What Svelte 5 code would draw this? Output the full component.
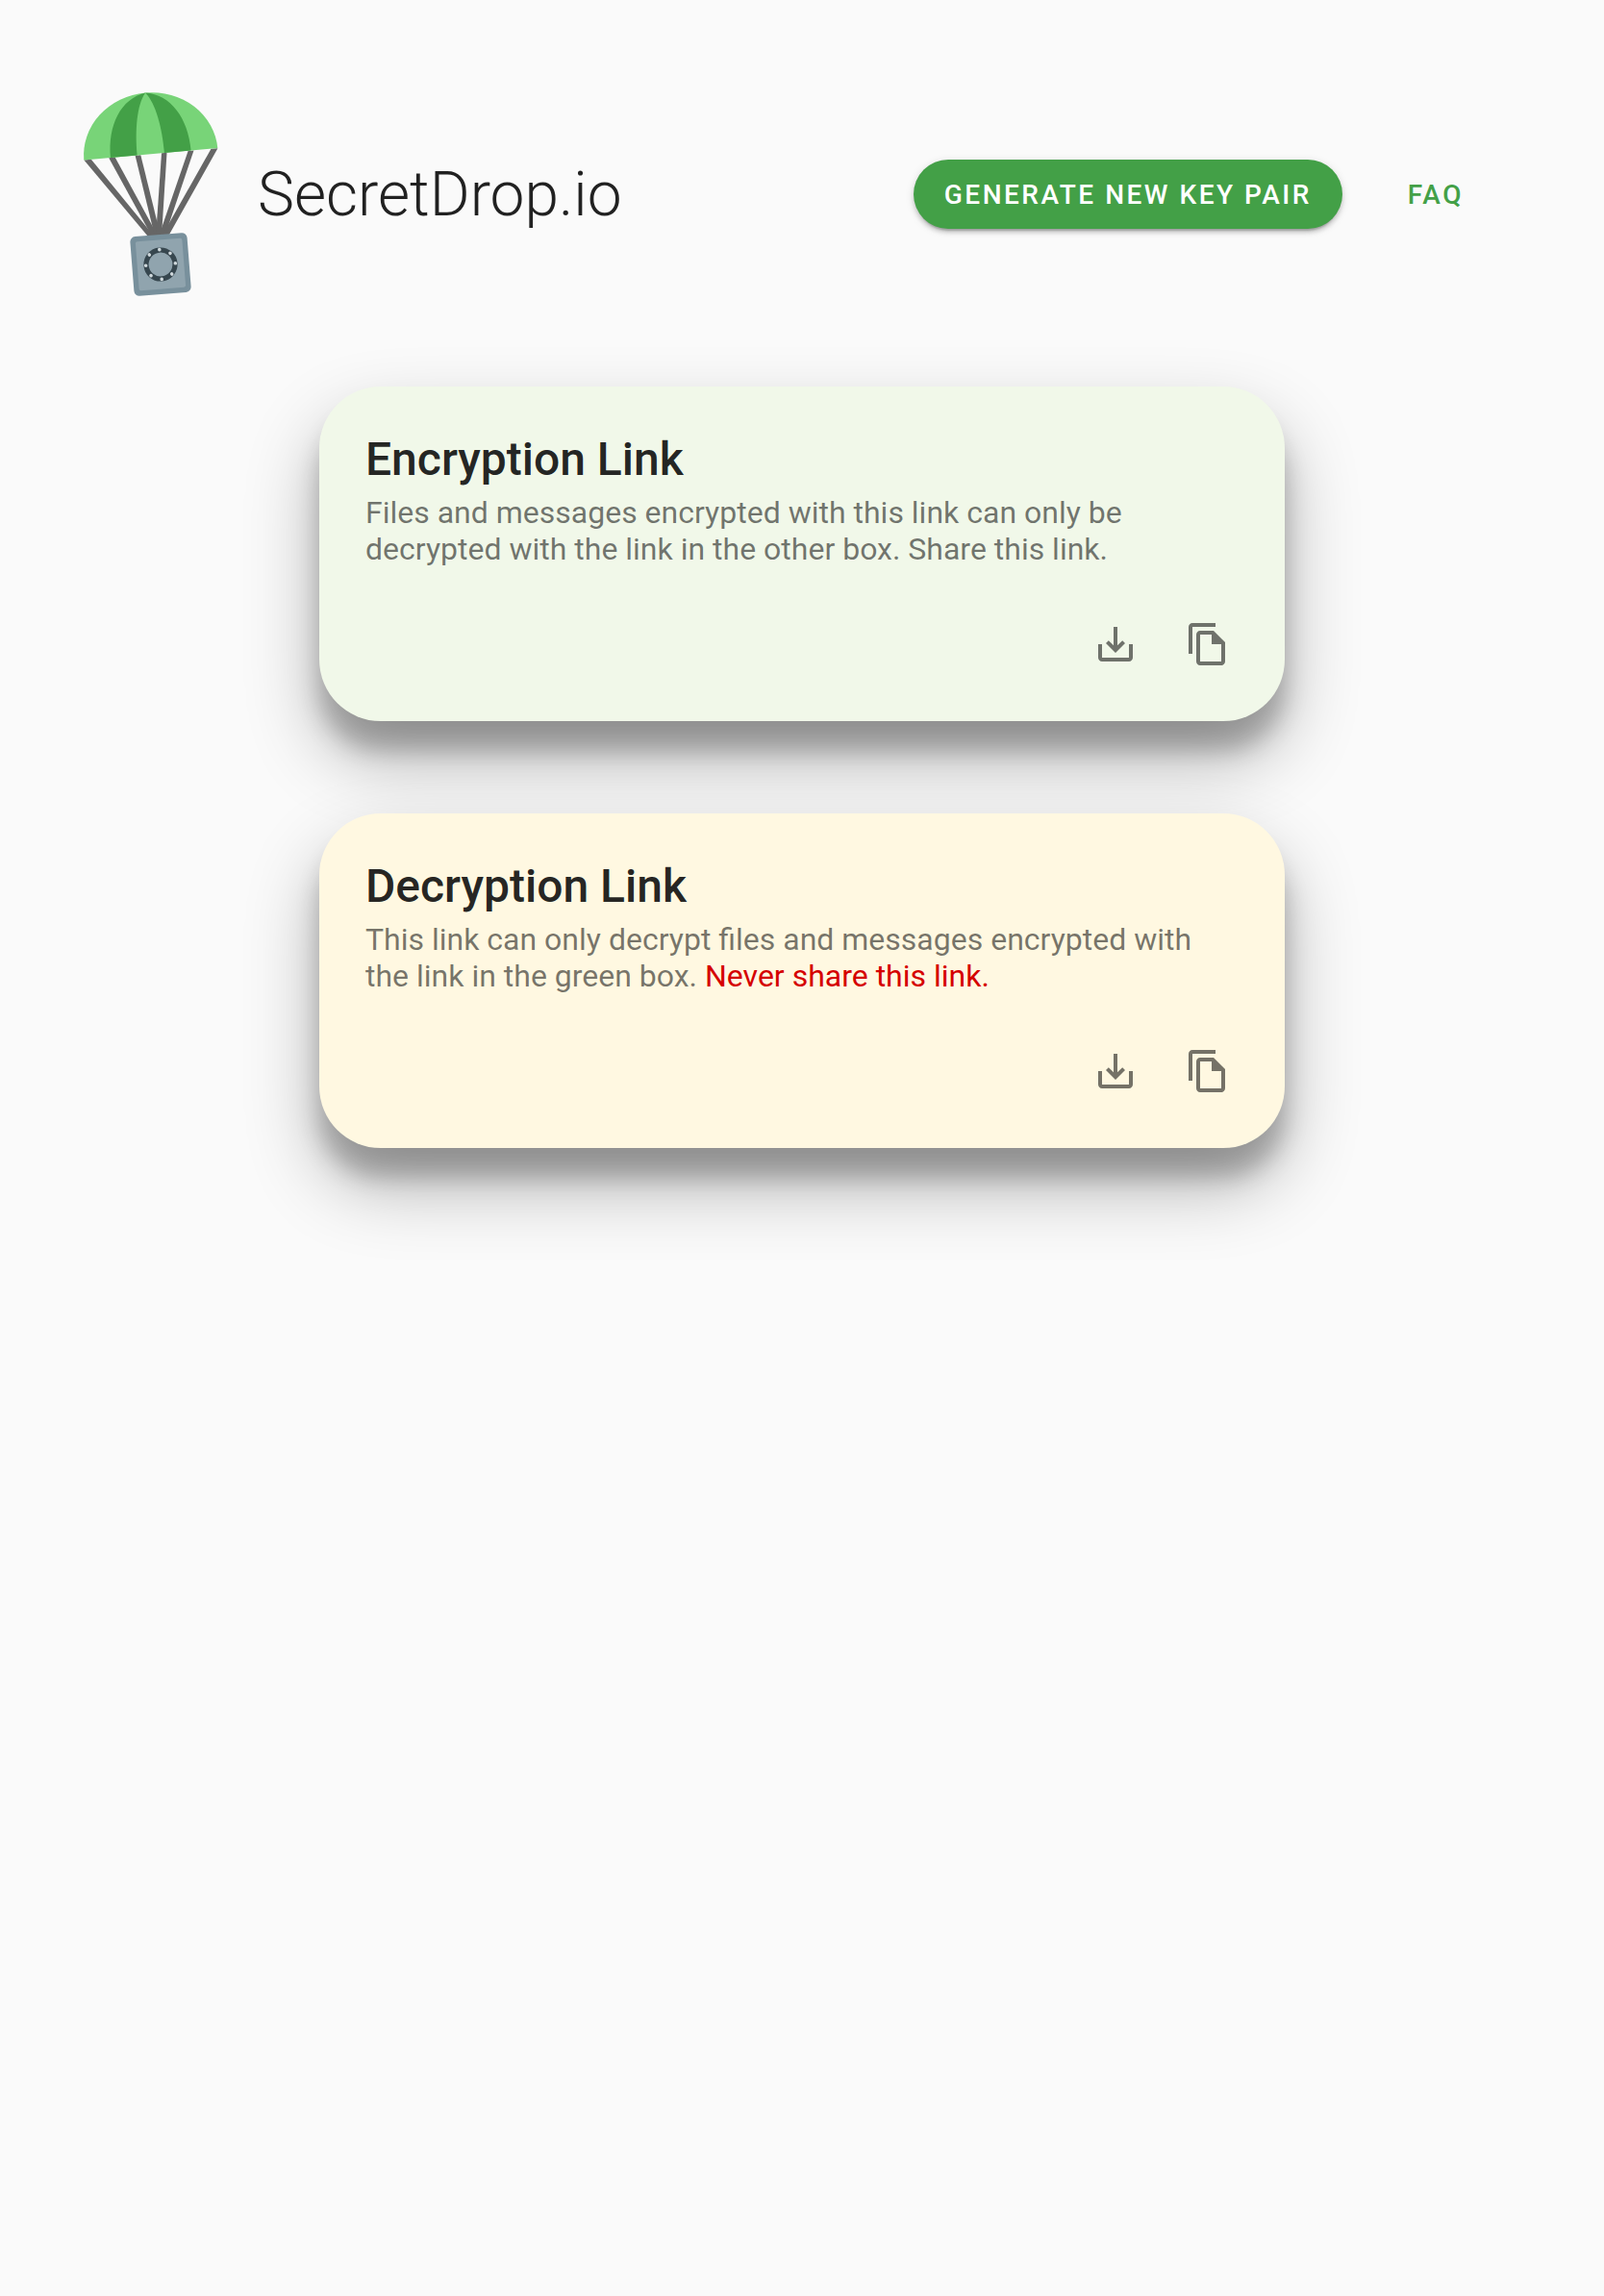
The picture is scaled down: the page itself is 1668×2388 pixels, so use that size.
<script>
  const dots = [0, 45, 90, 135, 180, 225, 270, 315];
  const ropes = [
    '87.4,166.4 94.8,165.8 160.5,246 154,246',
    '113.2,164.2 119.6,163.6 164.5,246 158,246',
    '140.6,161.8 146.3,161.3 167.2,246 161,246',
    '168,159.3 173.5,158.8 168,246 162,246',
    '195.6,157 201.5,156.4 171.3,246 165,246',
    '219.5,154.8 226.4,154.2 174.8,246 168,246',
  ];
  const cards = [
    {
      tone: 'encrypt',
      title: 'Encryption Link',
      text: 'Files and messages encrypted with this link can only be decrypted with the link in the other box. Share this link.',
      warning: '',
    },
    {
      tone: 'decrypt',
      title: 'Decryption Link',
      text: 'This link can only decrypt files and messages encrypted with the link in the green box. ',
      warning: 'Never share this link.',
    },
  ];
</script>

<header>
  <svg class="logo" viewBox="80 90 152 224" aria-label="SecretDrop logo">
    {#each ropes as points}
      <polygon {points} fill="#666" />
    {/each}
    <g transform="translate(156.8 160.3) rotate(-5.1)">
      <path d="M-69.8 0A69.8 64 0 0 1 69.8 0Z" fill="#78d478" />
      <path d="M0-64C-26-60-42-34-42 0H-14.2C-14.2-26-10-52 0-64Z" fill="#43a047" />
      <path d="M0-64C26-60 42-34 42 0H14.2C14.2-26 10-52 0-64Z" fill="#43a047" />
    </g>
    <g transform="translate(167 275) rotate(-4.5)">
      <rect x="-29.7" y="-31" width="59.4" height="62" rx="5.5" fill="#78909c" />
      <rect x="-24.3" y="-25.5" width="48.6" height="51" rx="2" fill="#90a4ae" />
      <circle r="15" fill="none" stroke="#37474f" stroke-width="5.2" />
      {#each dots as a}
        <circle cy="-15.4" r="1.8" fill="#cfd8dc" transform={`rotate(${a})`} />
      {/each}
    </g>
  </svg>
  <h1>SecretDrop.io</h1>
  <nav>
    <button class="raised">Generate new key pair</button>
    <button class="flat">FAQ</button>
  </nav>
</header>

<main>
  {#each cards as card}
    <section class={card.tone}>
      <h2>{card.title}</h2>
      <p>{card.text}{#if card.warning}<span>{card.warning}</span>{/if}</p>
      <div class="actions">
        <button aria-label="Download">
          <svg viewBox="0 0 24 24"><path d="M19 12v7H5v-7H3v7c0 1.1.9 2 2 2h14c1.1 0 2-.9 2-2v-7h-2zm-6 .67l2.59-2.58L17 11.5l-5 5-5-5 1.41-1.41L11 12.67V3h2z" /></svg>
        </button>
        <button aria-label="Copy">
          <svg viewBox="0 0 24 24"><path d="M16 1H4c-1.1 0-2 .9-2 2v14h2V3h12V1zM15 5H8c-1.1 0-1.99.9-1.99 2L6 21c0 1.1.89 2 1.99 2H19c1.1 0 2-.9 2-2V11l-6-6zM8 21V7h6v5h5v9H8z" /></svg>
        </button>
      </div>
    </section>
  {/each}
</main>

<style>
  :global(body) {
    min-height: 100vh;
    background: #fafafa;
    font-family: Roboto, sans-serif;
    color: rgba(0, 0, 0, 0.87);
    -webkit-font-smoothing: antialiased;
  }
  h1, h2, p { margin: 0; }
  button {
    border: 0;
    background: none;
    font: inherit;
    color: inherit;
  }
  header {
    display: flex;
    align-items: center;
    height: 402px;
    box-sizing: border-box;
    padding: 2px 130px 0 80px;
  }
  .logo {
    width: 152px;
    height: 224px;
  }
  h1 {
    margin-left: 36px;
    padding-top: 2px;
    font-size: 64px;
    font-weight: 300;
    line-height: 76px;
  }
  nav {
    display: flex;
    gap: 52px;
    margin-left: auto;
  }
  nav button {
    height: 72px;
    border-radius: 36px;
    font-size: 28px;
    font-weight: 500;
    letter-spacing: 2.5px;
    text-transform: uppercase;
    white-space: nowrap;
  }
  .raised {
    width: 446px;
    padding: 0;
    color: #fff;
    background: #43a047;
    box-shadow: 0 6px 2px -4px rgba(0, 0, 0, 0.2), 0 4px 4px rgba(0, 0, 0, 0.14), 0 2px 10px rgba(0, 0, 0, 0.12);
  }
  .flat {
    padding: 0 16px;
    color: #43a047;
  }
  .logo, h1, nav { flex: none; }
  main {
    display: flex;
    flex-direction: column;
    align-items: center;
    gap: 96px;
    box-sizing: border-box;
    min-height: calc(100vh - 402px);
  }
  section {
    display: flex;
    flex-direction: column;
    box-sizing: border-box;
    width: 1004px;
    height: 348px;
    padding: 48px 32px 32px 48px;
    border-radius: 64px;
    box-shadow: 0 38px 76px rgba(0, 0, 0, 0.3), 0 30px 24px rgba(0, 0, 0, 0.22);
  }
  .encrypt { background: #f1f8e9; }
  .decrypt { background: #fff8e1; }
  h2 {
    font-size: 48px;
    font-weight: 500;
    line-height: 56px;
  }
  p {
    width: 900px;
    margin-top: 8px;
    font-size: 32px;
    line-height: 38px;
    color: rgba(0, 0, 0, 0.54);
  }
  p span { color: #d50000; }
  .actions {
    display: flex;
    justify-content: flex-end;
    margin-top: auto;
  }
  .actions button {
    display: flex;
    width: 96px;
    height: 96px;
    padding: 24px;
  }
  .actions svg {
    width: 48px;
    height: 48px;
    fill: rgba(0, 0, 0, 0.54);
  }
</style>
